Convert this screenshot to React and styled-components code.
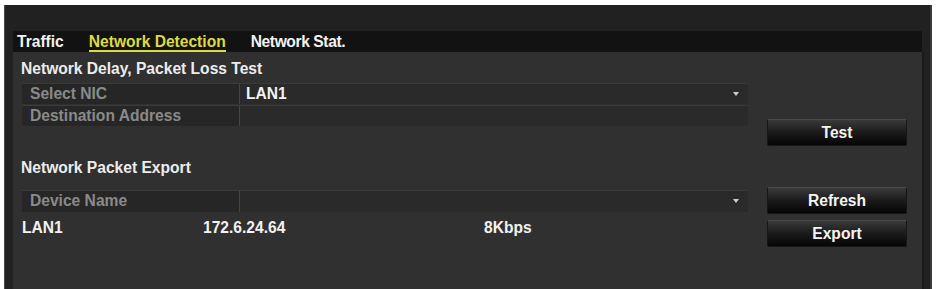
import React from 'react';
import styled, { createGlobalStyle } from 'styled-components';

const GlobalStyle = createGlobalStyle`
  html, body {
    margin: 0;
    padding: 0;
    background: #ffffff;
  }
  body {
    font-family: "Liberation Sans", Arial, sans-serif;
    font-weight: bold;
    font-size: 15.6px;
  }
`;

const Window = styled.div`
  margin: 5px 0 0 4px;
  width: 928px;
  height: 284px;
  display: flex;
  flex-direction: column;
  padding: 26px 6px 0 8px;
  box-sizing: border-box;
  background: #212121;
  border-left: 1px solid #4a4a4a;
  border-right: 2px solid #3a3a3a;
`;

const TabBar = styled.div`
  height: 21px;
  margin-right: 2px;
  display: flex;
  align-items: stretch;
  gap: 25px;
  padding-left: 4px;
  background: #121212;
`;

const Tab = styled.div`
  display: flex;
  align-items: center;
  color: ${(p) => (p.$active ? '#dcdc3e' : '#f2f2f2')};
  border-bottom: 2px solid ${(p) => (p.$active ? '#dcdc3e' : 'transparent')};
  padding-top: 2px;
  line-height: 1;
  letter-spacing: ${(p) => (p.$tight ? '-0.4px' : '0')};
`;

const Content = styled.div`
  flex: 1;
  background: #303030;
  border-right: 2px solid #1a1a1a;
  padding: 7px 0 0 8px;
`;

const Heading = styled.div`
  height: 20px;
  line-height: 20px;
  color: #ececec;
  margin-top: ${(p) => p.$top || 0}px;
`;

const Section = styled.div`
  display: grid;
  grid-template-columns: 726px 140px;
  column-gap: 19px;
  row-gap: ${(p) => p.$rowGap || 0}px;
  margin-top: ${(p) => p.$top || 0}px;
  padding-left: 1px;
  align-items: ${(p) => p.$align || 'start'};
`;

const Table = styled.div`
  display: flex;
  flex-direction: column;
  gap: 1px;
`;

const Row = styled.div`
  display: grid;
  grid-template-columns: 218px 1fr;
  height: ${(p) => p.$h || 21}px;
  box-sizing: border-box;
  background: #262626;
  border-top: 1px solid #3b3b3b;
  border-radius: 0 3px 3px 0;
`;

const Label = styled.div`
  display: flex;
  align-items: center;
  padding-left: 8px;
  color: #8a8a8a;
  border-right: 1px solid #464646;
`;

const Value = styled.div`
  display: flex;
  align-items: center;
  justify-content: space-between;
  padding: 0 9px 0 6px;
  color: #f2f2f2;
  background: #2a2a2a;
  border-radius: 0 3px 3px 0;
`;

const Button = styled.button`
  height: 27px;
  width: 140px;
  font-family: inherit;
  font-weight: bold;
  font-size: 15.6px;
  color: #f4f4f4;
  border: 1px solid #161616;
  border-top-color: #4a4a4a;
  border-radius: 2px;
  background: linear-gradient(to bottom, #3a3a3a 0%, #1d1d1d 45%, #050505 100%);
  cursor: pointer;
  margin-top: ${(p) => p.$top || 0}px;
  padding: 0;
`;

const DataRow = styled.div`
  display: grid;
  grid-template-columns: 181px 281px 1fr;
  line-height: 20px;
  color: #f2f2f2;
  align-self: start;
  margin-top: -2px;
`;

const Arrow = () => (
  <svg width="6" height="4" viewBox="0 0 6 4">
    <path d="M0 0 L6 0 L3 4 Z" fill="#cfcfcf" />
  </svg>
);

export default function App() {
  return (
    <>
      <GlobalStyle />
      <Window>
        <TabBar>
          <Tab>Traffic</Tab>
          <Tab $active>Network Detection</Tab>
          <Tab $tight>Network Stat.</Tab>
        </TabBar>
        <Content>
          <Heading>Network Delay, Packet Loss Test</Heading>
          <Section $top={4}>
            <Table>
              <Row>
                <Label>Select NIC</Label>
                <Value>
                  LAN1
                  <Arrow />
                </Value>
              </Row>
              <Row>
                <Label>Destination Address</Label>
                <Value />
              </Row>
            </Table>
            <Button $top={36}>Test</Button>
          </Section>
          <Heading $top={12}>Network Packet Export</Heading>
          <Section $top={9} $rowGap={6} $align="center">
            <Row $h={22}>
              <Label>Device Name</Label>
              <Value>
                <span />
                <Arrow />
              </Value>
            </Row>
            <Button>Refresh</Button>
            <DataRow>
              <span>LAN1</span>
              <span>172.6.24.64</span>
              <span>8Kbps</span>
            </DataRow>
            <Button>Export</Button>
          </Section>
        </Content>
      </Window>
    </>
  );
}
